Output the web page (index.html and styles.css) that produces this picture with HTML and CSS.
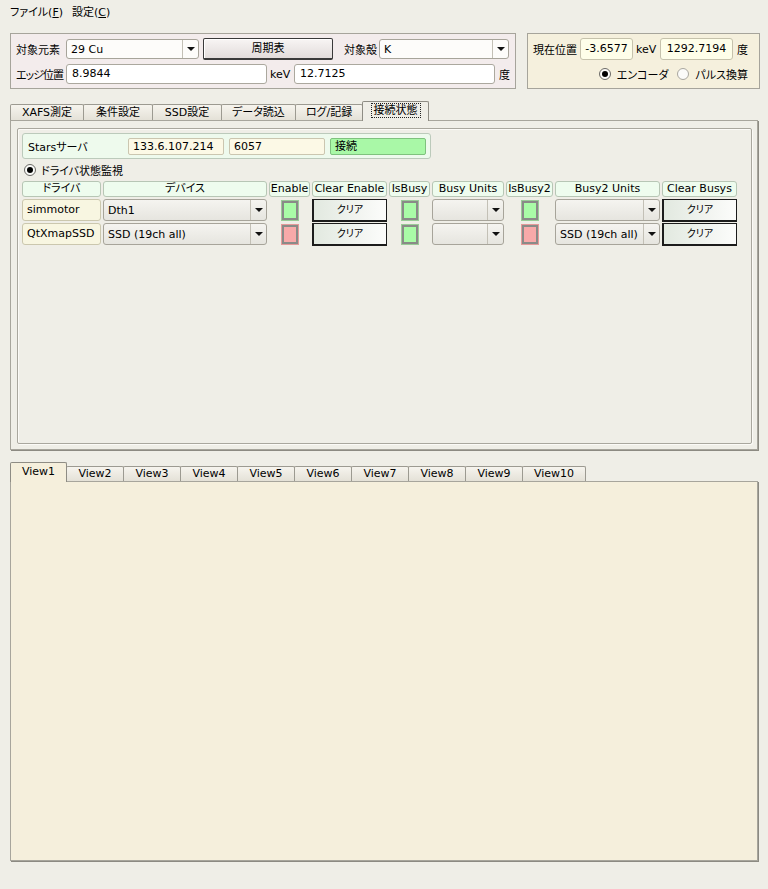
FILE: index.html
```html
<!DOCTYPE html>
<html lang="ja">
<head>
<meta charset="utf-8">
<link rel="stylesheet" href="styles.css">
</head>
<body>
<div class="menubar">
  <span>ファイル(<u>F</u>)</span>
  <span>設定(<u>C</u>)</span>
</div>

<div class="top">
  <div class="panel panel-pos">
    <div class="row r1">
      <span class="lbl w50">対象元素</span>
      <div class="combo combo-white w133"><span class="ct">29 Cu</span><span class="ca"></span></div>
      <div class="btn-pt">周期表</div>
      <span class="lbl lbl-shell">対象殻</span>
      <div class="combo combo-white w130"><span class="ct">K</span><span class="ca"></span></div>
    </div>
    <div class="row r2">
      <span class="lbl w50 tight">エッジ位置</span>
      <div class="field w201">8.9844</div>
      <span class="lbl lbl-kev">keV</span>
      <div class="field w201">12.7125</div>
      <span class="lbl lbl-deg">度</span>
    </div>
  </div>

  <div class="panel panel-cur">
    <div class="row r1">
      <span class="lbl w47">現在位置</span>
      <div class="yfield w53">-3.6577</div>
      <span class="lbl lbl-kev">keV</span>
      <div class="yfield w73">1292.7194</div>
      <span class="lbl lbl-deg">度</span>
    </div>
    <div class="row r2 radios">
      <span class="radio checked"></span><span class="rtext">エンコーダ</span>
      <span class="radio"></span><span class="rtext">パルス換算</span>
    </div>
  </div>
</div>

<div class="tabbar tabbar1">
  <div class="tab t74">XAFS測定</div>
  <div class="tab t70">条件設定</div>
  <div class="tab t70">SSD設定</div>
  <div class="tab t75">データ読込</div>
  <div class="tab t68">ログ/記録</div>
  <div class="tab active t67"><span class="focus">接続状態</span></div>
</div>
<div class="pane pane1">
  <div class="group">
    <div class="stars">
      <span class="stars-lbl">Starsサーバ</span>
      <div class="sfield">133.6.107.214</div>
      <div class="sfield">6057</div>
      <div class="sfield green">接続</div>
    </div>
    <div class="watch">
      <span class="radio checked"></span><span class="wtext">ドライバ状態監視</span>
    </div>
    <div class="grid">
      <div class="hd">ドライバ</div>
      <div class="hd">デバイス</div>
      <div class="hd">Enable</div>
      <div class="hd">Clear Enable</div>
      <div class="hd">IsBusy</div>
      <div class="hd">Busy Units</div>
      <div class="hd">IsBusy2</div>
      <div class="hd">Busy2 Units</div>
      <div class="hd">Clear Busys</div>

      <div class="drv">simmotor</div>
      <div class="combo combo-grey"><span class="ct">Dth1</span><span class="ca"></span></div>
      <div class="cell-c"><span class="ind ind-green"></span></div>
      <div class="clr">クリア</div>
      <div class="cell-c"><span class="ind ind-green"></span></div>
      <div class="combo combo-grey"><span class="ct"></span><span class="ca"></span></div>
      <div class="cell-c"><span class="ind ind-green"></span></div>
      <div class="combo combo-grey"><span class="ct"></span><span class="ca"></span></div>
      <div class="clr">クリア</div>

      <div class="drv">QtXmapSSD</div>
      <div class="combo combo-grey"><span class="ct">SSD (19ch all)</span><span class="ca"></span></div>
      <div class="cell-c"><span class="ind ind-red"></span></div>
      <div class="clr">クリア</div>
      <div class="cell-c"><span class="ind ind-green"></span></div>
      <div class="combo combo-grey"><span class="ct"></span><span class="ca"></span></div>
      <div class="cell-c"><span class="ind ind-red"></span></div>
      <div class="combo combo-grey"><span class="ct">SSD (19ch all)</span><span class="ca"></span></div>
      <div class="clr">クリア</div>
    </div>
  </div>
</div>

<div class="tabbar tabbar2">
  <div class="tab active v56">View1</div>
  <div class="tab v58">View2</div>
  <div class="tab v58">View3</div>
  <div class="tab v58">View4</div>
  <div class="tab v58">View5</div>
  <div class="tab v58">View6</div>
  <div class="tab v58">View7</div>
  <div class="tab v58">View8</div>
  <div class="tab v58">View9</div>
  <div class="tab v64">View10</div>
</div>
<div class="pane pane2"></div>
</body>
</html>
```

FILE: styles.css
```css
* { box-sizing: border-box; }
html, body { margin: 0; padding: 0; }
body {
  width: 768px;
  height: 889px;
  overflow: hidden;
  background: #efeee7;
  font-family: "DejaVu Sans", "Noto Sans CJK JP", sans-serif;
  font-size: 11px;
  font-feature-settings: "palt" 1;
  color: #000;
}

/* menu */
.menubar {
  display: flex;
  gap: 9px;
  height: 21px;
  align-items: center;
  padding-left: 10px;
}
.menubar u { text-decoration: underline; }

/* top panels */
.top {
  display: flex;
  gap: 11px;
  margin-top: 12px;
  padding-left: 10px;
}
.panel {
  height: 56px;
  border: 1px solid #a6a49b;
  padding: 4px 0 0 5px;
  display: flex;
  flex-direction: column;
  gap: 4px;
}
.panel-pos { width: 506px; background: #f3ecec; }
.panel-cur { width: 233px; background: #f5f0dd; }
.row { display: flex; align-items: center; }
.r1 { height: 22px; }
.r2 { height: 20px; }
.lbl { flex: none; white-space: nowrap; }
.w50 { width: 50px; }
.w47 { width: 47px; }
.tight { letter-spacing: -1px; }
.lbl-shell { margin-left: 11px; width: 35px; }
.lbl-kev { margin-left: 3px; width: 24px; }
.lbl-deg { margin-left: 4px; }

.combo {
  display: flex;
  align-items: center;
  height: 20px;
  border: 1px solid #a7a49a;
  border-radius: 3px;
  flex: none;
}
.combo-white { background: #fdfcfa; }
.combo-grey { background: linear-gradient(#f5f4f0, #e6e5df); height: 22px; }
.combo .ct { flex: 1; padding-left: 4px; white-space: nowrap; overflow: hidden; }
.combo .ca {
  width: 16px;
  height: 100%;
  border-left: 1px solid #c3c0b6;
  display: flex;
  align-items: center;
  justify-content: center;
}
.combo .ca::after {
  content: "";
  border-left: 4px solid transparent;
  border-right: 4px solid transparent;
  border-top: 4px solid #111;
}
.w133 { width: 133px; }
.w130 { width: 130px; }
.w201 { width: 201px; }
.w53 { width: 53px; }
.w73 { width: 73px; }

.btn-pt {
  width: 130px;
  height: 22px;
  margin-left: 4px;
  border: 1px solid #3a3a3a;
  border-bottom-width: 2px;
  border-radius: 2px;
  background: linear-gradient(#f8f5f4, #e2dcdb);
  box-shadow: inset 1px 1px 0 #fff;
  text-align: center;
  line-height: 19px;
}

.field {
  height: 20px;
  border: 1px solid #aba89e;
  border-radius: 3px;
  background: #fff;
  padding-left: 5px;
  line-height: 18px;
  flex: none;
}
.yfield {
  height: 22px;
  border: 1px solid #c6c2ac;
  border-radius: 3px;
  background: #fefee9;
  text-align: center;
  line-height: 20px;
  flex: none;
}

.radios {
  justify-content: flex-end;
  padding-right: 11px;
}
.radio {
  width: 12px;
  height: 12px;
  border-radius: 50%;
  border: 1px solid #a9a79f;
  background: #fbfbf9;
  display: flex;
  align-items: center;
  justify-content: center;
  flex: none;
}
.radio.checked { border-color: #6b6a66; }
.radio.checked::after {
  content: "";
  width: 6px;
  height: 6px;
  border-radius: 50%;
  background: #000;
}
.rtext { margin-left: 6px; margin-right: 9px; }
.rtext:last-child { margin-right: 0; }

/* tabs */
.tabbar {
  display: flex;
  align-items: flex-end;
  padding-left: 10px;
}
.tabbar1 { margin-top: 12px; height: 19px; }
.tabbar2 { margin-top: 12px; height: 19px; }
.tab {
  height: 16px;
  margin-right: -1px;
  border: 1px solid #9c9a91;
  border-bottom: none;
  border-radius: 2px 2px 0 0;
  background: linear-gradient(#f6f4ee, #e4e1d7);
  text-align: center;
  line-height: 15px;
  white-space: nowrap;
}
.tabbar2 .tab { height: 15px; line-height: 14px; }
.tab.active {
  position: relative;
  z-index: 1;
  height: 20px;
  margin-bottom: -1px;
  margin-right: 0;
  background: #efeee7;
  border-color: #8e8c84;
  line-height: 18px;
}
.tabbar2 .tab.active {
  height: 20px;
  background: #f5efdc;
  line-height: 17px;
  margin-right: -1px;
  z-index: 2;
}
.focus {
  outline: 1px dotted #222;
  outline-offset: 0;
  padding: 0 2px;
}
.t74 { width: 74px; }
.t70 { width: 70px; }
.t75 { width: 75px; }
.t68 { width: 68px; }
.t67 { width: 67px; }
.v56 { width: 57px; }
.v58 { width: 58px; }
.v64 { width: 64px; }

.pane {
  margin-left: 10px;
  width: 748px;
  border: 1px solid #a7a59c;
  box-shadow: 1px 1px 0 #8c8a82;
}
.pane1 {
  height: 330px;
  padding: 7px 0 0 6px;
}
.pane2 {
  height: 380px;
  background: #f5efdc;
}

.group {
  width: 735px;
  height: 316px;
  border: 1px solid #a9a79e;
  border-radius: 2px;
  box-shadow: inset 1px 1px 0 #fbfaf6, 1px 1px 0 #fbfaf6;
  padding: 4px 0 0 4px;
}
.stars {
  width: 409px;
  height: 26px;
  display: flex;
  align-items: center;
  gap: 5px;
  padding-left: 5px;
  border: 1px solid #bccabb;
  border-radius: 3px;
  background: #eefaed;
}
.stars-lbl { width: 95px; }
.sfield {
  width: 96px;
  height: 17px;
  border: 1px solid #cbc6b0;
  border-radius: 2px;
  background: #fcf9e6;
  padding-left: 4px;
  line-height: 15px;
}
.sfield.green {
  background: #a9f8a7;
  border-color: #7fc27e;
}

.watch {
  display: flex;
  align-items: center;
  height: 13px;
  margin-top: 4px;
  padding-left: 2px;
}
.wtext { margin-left: 5px; }

.grid {
  display: grid;
  grid-template-columns: 79px 164px 41px 75px 41px 72px 47px 105px 75px;
  grid-template-rows: 16px 22px 22px;
  column-gap: 2px;
  row-gap: 2px;
  margin-top: 5px;
}
.hd {
  border: 1px solid #b7c6b5;
  border-radius: 3px;
  background: #eefcee;
  text-align: center;
  line-height: 14px;
  white-space: nowrap;
}
.drv {
  border: 1px solid #cbc7ae;
  border-radius: 3px;
  background: #f8f6e1;
  padding-left: 4px;
  line-height: 20px;
  white-space: nowrap;
}
.cell-c {
  display: flex;
  align-items: center;
  justify-content: center;
}
.ind {
  width: 18px;
  height: 21px;
  border: 3px solid #8a8b88;
}
.ind-green { background: #a9fca7; outline: 1px solid #9acb98; outline-offset: -1px; }
.ind-red { background: #f9a9a9; outline: 1px solid #e69a9a; outline-offset: -1px; }
.clr {
  border: 1px solid #1c1c1c;
  border-left-width: 2px;
  border-bottom-width: 2px;
  background: linear-gradient(to right, #e2e9e0, #fcfcfb);
  text-align: center;
  font-size: 10px;
  line-height: 19px;
  height: 23px;
}
```
